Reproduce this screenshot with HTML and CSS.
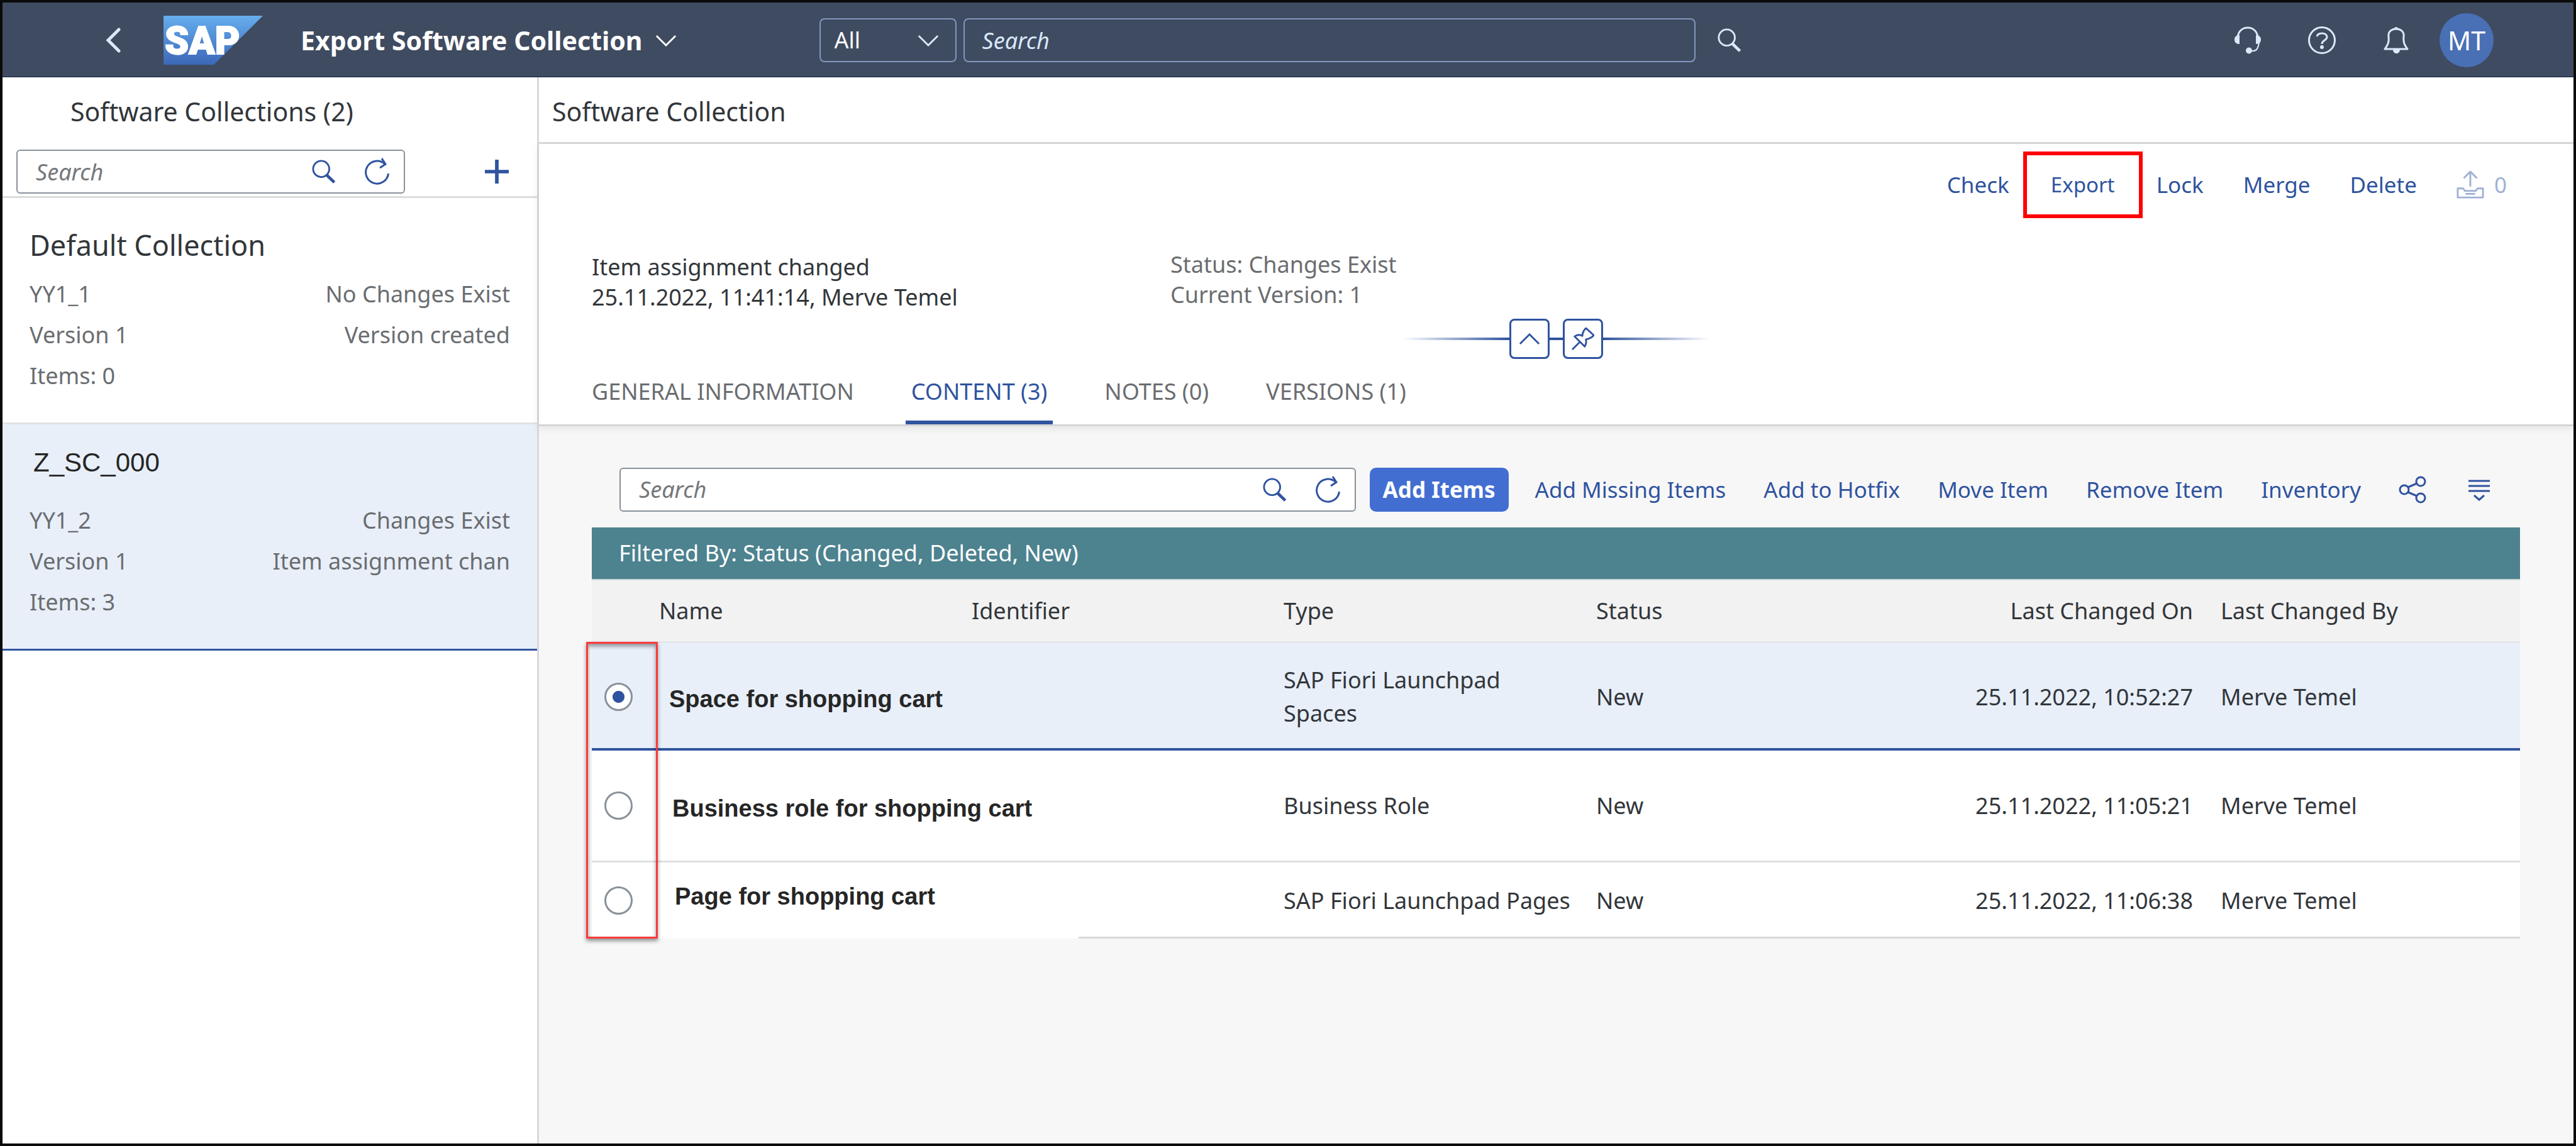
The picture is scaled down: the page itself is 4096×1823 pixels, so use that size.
FILE: index.html
```html
<!DOCTYPE html>
<html lang="en">
<head>
<meta charset="utf-8">
<title>Export Software Collection</title>
<link rel="stylesheet" href="styles.css">
</head>
<body>
<svg class="sprite" aria-hidden="true">
  <symbol id="i-search" viewBox="0 0 40 40"><circle cx="15.500" cy="15.500" r="13.500" fill="none" stroke="currentColor" stroke-width="3"/><path d="M25 26l12.500 12" stroke="currentColor" stroke-width="5" fill="none"/></symbol>
  <symbol id="i-refresh" viewBox="0 0 40 44"><path d="M37.500 25A18 18 0 1 1 32 10" fill="none" stroke="currentColor" stroke-width="3"/><path d="M27 1l6 9-9 6" fill="none" stroke="currentColor" stroke-width="3"/></symbol>
  <symbol id="i-down" viewBox="0 0 36 20"><path d="M2 2l16 16L34 2" fill="none" stroke="currentColor" stroke-width="3"/></symbol>
</svg>
<div class="app">
  <header class="shell">
    <button class="icon-btn back" aria-label="Back"><svg viewBox="0 0 24 40"><path d="M21 3L4 20l17 17" fill="none" stroke="currentColor" stroke-width="5" stroke-linecap="round"/></svg></button>
    <a class="logo" href="#" aria-label="SAP home">
      <svg viewBox="0 0 158 78"><defs><linearGradient id="sap" x1="0" y1="0" x2="0" y2="1"><stop offset="0" stop-color="#66aeee"/><stop offset="1" stop-color="#3c67b8"/></linearGradient></defs><path d="M0 0h158L80 78H0z" fill="url(#sap)"/><text x="2" y="61" class="logo-text">SAP</text></svg>
    </a>
    <button class="app-title">Export Software Collection <svg class="chev"><use href="#i-down"/></svg></button>
    <div class="shell-search">
      <label class="scope"><select aria-label="Search scope"><option>All</option></select><svg class="chev"><use href="#i-down"/></svg></label>
      <input type="search" placeholder="Search" aria-label="Search">
      <button class="icon-btn" aria-label="Search"><svg class="i40"><use href="#i-search"/></svg></button>
    </div>
    <div class="shell-tools">
      <button class="icon-btn" aria-label="Support"><svg class="i44" viewBox="0 0 44 44"><path d="M6 16C8 7 14 2 22 2s14 5 16 14" fill="none" stroke="currentColor" stroke-width="3"/><path d="M9 14v14c-6 0-8-3-8-7s2-7 8-7zM35 14v14c6 0 8-3 8-7s-2-7-8-7z" fill="currentColor"/><path d="M40 26c-1 7-3 13-9 13h-6" fill="none" stroke="currentColor" stroke-width="2"/><circle cx="24" cy="38.500" r="5" fill="currentColor"/></svg></button>
      <button class="icon-btn" aria-label="Help"><svg class="i44" viewBox="0 0 44 44"><circle cx="22" cy="22" r="20.500" fill="none" stroke="currentColor" stroke-width="3"/><path d="M14 16c1-4 4-5 8-5s8 2 8 6c0 5-8 5-8 11" fill="none" stroke="currentColor" stroke-width="3"/><circle cx="22" cy="33" r="3" fill="currentColor"/></svg></button>
      <button class="icon-btn" aria-label="Notifications"><svg class="i44" viewBox="0 0 44 44"><path d="M4 36c4-6 7-9 6-20C9 8 15 4 22 4s13 4 12 12c-1 11 2 14 6 20z" fill="none" stroke="currentColor" stroke-width="3" stroke-linejoin="round"/><path d="M19 4a3 3 0 0 1 6 0zM17 37h11c0 4-3 6-5.500 6S17 41 17 37z" fill="currentColor"/></svg></button>
      <button class="avatar" aria-label="User">MT</button>
    </div>
  </header>
  <div class="panes">
    <aside class="master">
      <h2 class="pane-title">Software Collections (2)</h2>
      <div class="master-bar">
        <div class="search-box">
          <input type="search" placeholder="Search" aria-label="Search collections">
          <button class="icon-btn" aria-label="Search"><svg class="i40"><use href="#i-search"/></svg></button>
          <button class="icon-btn" aria-label="Refresh"><svg class="i44r"><use href="#i-refresh"/></svg></button>
        </div>
        <button class="icon-btn add" aria-label="Add"><svg class="i40" viewBox="0 0 40 40"><path d="M20 0v40M0 20h40" stroke="currentColor" stroke-width="6"/></svg></button>
      </div>
      <ul class="collections">
        <li class="collection">
          <h3>Default Collection</h3>
          <div class="line"><span>YY1_1</span><span>No Changes Exist</span></div>
          <div class="line"><span>Version 1</span><span>Version created</span></div>
          <div class="line"><span>Items: 0</span></div>
        </li>
        <li class="collection selected">
          <h3>Z_SC_000</h3>
          <div class="line"><span>YY1_2</span><span>Changes Exist</span></div>
          <div class="line"><span>Version 1</span><span>Item assignment chan</span></div>
          <div class="line"><span>Items: 3</span></div>
        </li>
      </ul>
    </aside>
    <main class="detail">
      <h2 class="pane-title">Software Collection</h2>
      <section class="object-head">
        <div class="actions">
          <button>Check</button>
          <button class="marked">Export</button>
          <button>Lock</button>
          <button>Merge</button>
          <button>Delete</button>
          <button class="count" disabled><svg class="i44" viewBox="0 0 46 46"><g fill="none" stroke="currentColor" stroke-width="3" stroke-linejoin="round"><path d="M23 26V2M12 12L23 1l11 11"/><path d="M2 44V29h9l3 4h18l3-4h9v15z"/><path d="M15 38h16"/></g></svg>0</button>
        </div>
        <div class="facts">
          <p class="change">Item assignment changed<br>25.11.2022, 11:41:14, Merve Temel</p>
          <p class="status">Status: Changes Exist<br>Current Version: 1</p>
        </div>
        <div class="collapse">
          <span class="rule"></span>
          <button aria-label="Collapse header"><svg class="chev" viewBox="0 0 36 20"><path d="M2 18L18 2l16 16" fill="none" stroke="currentColor" stroke-width="3"/></svg></button>
          <span class="rule mid"></span>
          <button aria-label="Pin header"><svg class="i36" viewBox="0 0 38 38"><path d="M24 1l13 12c-4 5-9 6-13 7 1 5 0 9-2 12L5 15c4-3 9-3 13-1 0-4 2-9 6-13zM14 24L1 37" fill="none" stroke="currentColor" stroke-width="3" stroke-linejoin="round"/></svg></button>
          <span class="rule end"></span>
        </div>
        <nav class="tabs">
          <a href="#">GENERAL INFORMATION</a>
          <a href="#" class="current">CONTENT (3)</a>
          <a href="#">NOTES (0)</a>
          <a href="#">VERSIONS (1)</a>
        </nav>
      </section>
      <section class="content">
        <div class="toolbar">
          <div class="search-box">
            <input type="search" placeholder="Search" aria-label="Search items">
            <button class="icon-btn" aria-label="Search"><svg class="i40"><use href="#i-search"/></svg></button>
            <button class="icon-btn" aria-label="Refresh"><svg class="i44r"><use href="#i-refresh"/></svg></button>
          </div>
          <button class="primary">Add Items</button>
          <button>Add Missing Items</button>
          <button>Add to Hotfix</button>
          <button>Move Item</button>
          <button>Remove Item</button>
          <button>Inventory</button>
          <button class="icon-btn" aria-label="Share"><svg class="i44" viewBox="0 0 44 44"><g fill="none" stroke="currentColor" stroke-width="3"><circle cx="9" cy="22" r="7"/><circle cx="35" cy="9" r="7"/><circle cx="35" cy="35" r="7"/><path d="M15 18l14-6M15 26l14 6"/></g></svg></button>
          <button class="icon-btn menu" aria-label="View settings"><svg class="i36" viewBox="0 0 36 36"><path d="M1 4h34M1 12h34M1 20h34" stroke="currentColor" stroke-width="3"/><path d="M10 27l8 7 8-7" fill="none" stroke="currentColor" stroke-width="3"/></svg></button>
        </div>
        <div class="info-bar">Filtered By: Status (Changed, Deleted, New)</div>
        <div class="table-wrap">
          <table>
            <thead>
              <tr><th class="c-sel"></th><th class="c-name">Name</th><th class="c-id">Identifier</th><th class="c-type">Type</th><th class="c-status">Status</th><th class="c-on">Last Changed On</th><th class="c-by">Last Changed By</th></tr>
            </thead>
            <tbody>
              <tr class="r1"><td class="c-sel"><input type="radio" name="item" aria-label="Space for shopping cart" checked></td><td class="c-name"><b>Space for shopping cart</b></td><td></td><td>SAP Fiori Launchpad Spaces</td><td>New</td><td class="c-on">25.11.2022, 10:52:27</td><td>Merve Temel</td></tr>
              <tr class="r2"><td class="c-sel"><input type="radio" name="item" aria-label="Business role for shopping cart"></td><td class="c-name"><b>Business role for shopping cart</b></td><td></td><td>Business Role</td><td>New</td><td class="c-on">25.11.2022, 11:05:21</td><td>Merve Temel</td></tr>
              <tr class="r3"><td class="c-sel"><input type="radio" name="item" aria-label="Page for shopping cart"></td><td class="c-name"><b>Page for shopping cart</b></td><td></td><td>SAP Fiori Launchpad Pages</td><td>New</td><td class="c-on">25.11.2022, 11:06:38</td><td>Merve Temel</td></tr>
            </tbody>
          </table>
          <div class="frame"></div>
        </div>
      </section>
    </main>
  </div>
</div>
</body>
</html>
```
FILE: styles.css
```css
* { box-sizing: border-box; }
html, body { height: 100%; }
body {
  margin: 0;
  font-family: "Noto Sans", "Open Sans", sans-serif;
  font-size: 36px;
  line-height: 48px;
  color: #32363a;
  background: #fff;
}
h2, h3, p, ul { margin: 0; padding: 0; font-weight: 400; }
ul { list-style: none; }
a { color: inherit; text-decoration: none; }
button, input, select { font: inherit; color: inherit; background: none; border: 0; padding: 0; margin: 0; }
button { cursor: pointer; white-space: nowrap; }
input[type="search"] { appearance: none; outline: 0; min-width: 0; }
input::placeholder { font-style: italic; color: #74777a; opacity: 1; }
svg { display: block; flex: none; }
.sprite { position: absolute; width: 0; height: 0; }
.icon-btn { display: flex; align-items: center; justify-content: center; flex: none; }
.i36 { width: 36px; height: 36px; }
.i40 { width: 38px; height: 38px; }
.i44 { width: 44px; height: 44px; }
.i44r { width: 40px; height: 44px; }
.chev { width: 34px; height: 19px; }

.app {
  min-height: 100%;
  display: flex;
  flex-direction: column;
  border: 4px solid #0a0a0a;
}

/* Shell bar */
.shell {
  position: relative;
  display: flex;
  align-items: center;
  height: 119px;
  padding: 3px 127px 0 164px;
  background: #3f4b60;
  color: #d9e8fb;
  border-bottom: 2px solid #2c3a52;
}
.back svg { width: 24px; height: 40px; }
.logo { margin-left: 68px; }
.logo svg { width: 158px; height: 78px; }
.logo-text { font: 900 61px Roboto, "Liberation Sans", sans-serif; fill: #fff; stroke: #fff; stroke-width: 2px; }
.app-title { display: flex; align-items: center; gap: 20px; margin-left: 60px; font-size: 41px; font-weight: 700; color: #fff; }
.shell-search { display: flex; gap: 11px; width: 1466px; margin: 0 auto 0 227px; }
.scope, .shell-search input { height: 70px; border: 2px solid #8197bd; border-radius: 8px; }
.scope { display: flex; align-items: center; width: 218px; padding: 0 26px 0 22px; color: #fff; }
.scope select { flex: 1; appearance: none; outline: 0; }
.scope .chev { color: #d9e8fb; }
.shell-search input { flex: 1; padding: 0 28px; }
.shell-search input::placeholder { color: #d9e8fb; }
.shell-search .icon-btn { margin-left: 24px; }
.shell-tools { display: flex; align-items: center; gap: 74px; }
.avatar { width: 86px; height: 86px; margin-left: -27px; border-radius: 50%; background: #496fb5; color: #fff; font-size: 41px; }

/* Panes */
.panes { flex: 1; display: grid; grid-template-columns: 853px minmax(0, 1fr); }
.master { border-right: 3px solid #d9d9d9; }
.pane-title { height: 104px; line-height: 108px; padding-left: 108px; font-size: 41px; color: #32363a; }
.search-box { display: flex; align-items: center; height: 70px; border: 2px solid #89919a; border-radius: 6px; background: #fff; color: #2f539f; padding-right: 22px; gap: 46px; }
.search-box input { flex: 1; height: 100%; padding-left: 29px; color: #32363a; }
.master-bar { display: flex; align-items: flex-start; justify-content: space-between; height: 88px; padding: 11px 45px 0 22px; border-bottom: 3px solid #dcdcdc; color: #2f539f; }
.master-bar .search-box { width: 618px; }
.add { height: 70px; }
.collection { height: 360px; padding: 43px 43px 0; border-bottom: 3px solid #e0e2e4; color: #6a6d70; }
.collection h3 { height: 78px; line-height: 64px; font-size: 45px; color: #32363a; }
.line { display: flex; justify-content: space-between; height: 65px; line-height: 64px; }
.collection.selected { padding-top: 29px; border-bottom-color: #2f539f; background: #e8eff9; }
.selected h3 { height: 92px; padding-left: 6px; font-family: "Liberation Sans", sans-serif; font-size: 42px; color: #262626; }

/* Detail pane */
.detail { display: flex; flex-direction: column; background: #f7f7f7; }
.detail .pane-title { height: 106px; padding-left: 21px; background: #fff; border-bottom: 3px solid #dadada; }
.object-head { background: #fff; border-bottom: 3px solid #d5d5d5; box-shadow: 0 4px 14px #00000014; }
.actions { display: flex; justify-content: flex-end; align-items: center; height: 130px; gap: 63px; padding-right: 106px; font-size: 35px; color: #2f539f; }
.marked { height: 106px; width: 190px; margin: 0 -41px; border: 6px solid #f00; font-size: 33px; }
.count { display: flex; align-items: center; gap: 16px; color: #2f539f; opacity: .45; }
.facts { display: flex; height: 148px; padding: 38px 84px 0; }
.change { width: 920px; padding-top: 4px; }
.status { color: #6a6d70; }
.collapse { display: flex; align-items: center; justify-content: center; height: 64px; color: #2f539f; }
.collapse button { display: grid; place-items: center; width: 64px; height: 64px; border: 3px solid #2f539f; border-radius: 8px; }
.rule { width: 170px; height: 4px; background: linear-gradient(to left, #2f539f, transparent); }
.rule.mid { width: 21px; background: #2f539f; }
.rule.end { background: linear-gradient(to right, #2f539f, transparent); }
.tabs { display: flex; gap: 73px; height: 104px; padding: 0 75px; color: #6a6d70; }
.tabs a { padding: 28px 9px 0; }
.tabs .current { color: #2f539f; border-bottom: 6px solid #2f539f; border-radius: 4px 4px 0 0; }

.content { padding: 64px 85px 0 84px; }
.toolbar { display: flex; align-items: center; gap: 60px; height: 97px; padding: 0 47px 24px 44px; font-size: 35px; color: #2f539f; }
.toolbar .search-box { flex: 1; font-size: 36px; }
.primary { height: 70px; padding: 0 21px; margin: 0 -18px 0 -38px; border-radius: 10px; background: #436ed1; color: #fff; font-weight: 700; }
.menu { margin-left: 6px; }
.info-bar { height: 84px; line-height: 82px; padding-left: 43px; background: #4d828f; color: #fff; border-bottom: 2px solid #d0d8da; }
.table-wrap { position: relative; }
table { width: 100%; table-layout: fixed; border-collapse: collapse; background: #fff; line-height: 53px; }
th { height: 98px; padding: 0; text-align: left; font-weight: 400; background: #f2f2f2; border-bottom: 3px solid #e3e5e8; }
td { padding: 0 40px 0 0; }
th.c-sel { width: 107px; }
th.c-name { width: 497px; }
th.c-id { width: 496px; }
th.c-type { width: 497px; }
th.c-status { width: 473px; }
th.c-on { width: 520px; }
td:nth-child(4) { padding-right: 0; }
.r1 td:nth-child(4) { padding-right: 90px; }
th.c-on, td.c-on { text-align: right; padding-right: 44px; }
td.c-sel { padding: 0 0 0 20px; }
td b { font: 700 38px/48px "Liberation Sans", sans-serif; color: #262626; white-space: nowrap; }
.r1 { height: 171px; background: #e8eff9; border-bottom: 4px solid #2f539f; }
.r1 td { padding-top: 4px; }
.r1 .c-name { padding: 10px 0 0 16px; }
.r2 { height: 178px; border-bottom: 3px solid #e0e0e0; }
.r2 .c-name { padding: 8px 0 0 21px; }
.r3 { height: 123px; background: linear-gradient(#d9d9d9, #d9d9d9) right bottom / calc(100% - 774px) 3px no-repeat; }
.r3 .c-name { padding: 0 0 14px 25px; }
input[type="radio"] {
  appearance: none;
  display: block;
  width: 45px;
  height: 45px;
  border: 3px solid #89919a;
  border-radius: 50%;
  background: #fff;
}
input[type="radio"]:checked { background: radial-gradient(circle, #2f539f 9px, #fff 10px); }
.frame {
  position: absolute;
  left: -9px;
  top: 98px;
  width: 114px;
  bottom: 0;
  border: 3px solid #fb3a3a;
  box-shadow: 0 4px 6px #0006, inset 0 4px 6px #0006;
  pointer-events: none;
}
```
